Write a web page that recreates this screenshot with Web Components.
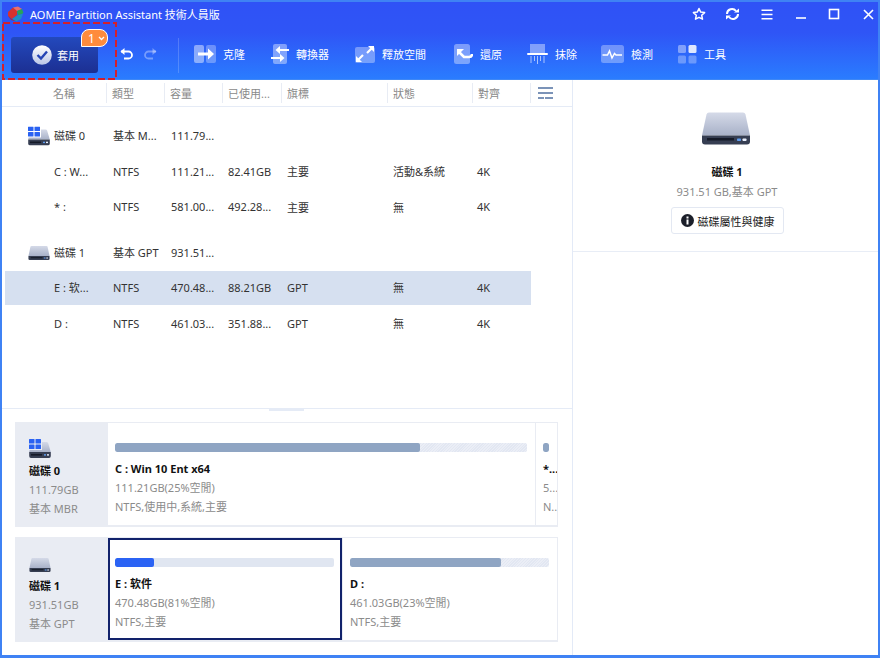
<!DOCTYPE html>
<html lang="zh-Hant">
<head>
<meta charset="utf-8">
<title>AOMEI Partition Assistant</title>
<style>
  html, body { margin: 0; padding: 0; background: #fff; }
  body { font-family: "Noto Sans", "Noto Sans CJK TC", sans-serif; font-size: 11px; color: #333; }
</style>
</head>
<body>
<app-window></app-window>
<script>
const FONT = `"Noto Sans", "Noto Sans CJK TC", sans-serif`;

const diskBody = (id) => `
  <defs><linearGradient id="${id}" x1="0" y1="0" x2="0" y2="1"><stop offset="0" stop-color="#d5dae8"/><stop offset="1" stop-color="#a8b1c8"/></linearGradient></defs>
  <path d="M5.500 2Q6 0 8 0H42Q44 0 44.500 2L49 23H1Z" fill="url(#${id})"/>
  <path d="M1 23H49V29Q49 32 46 32H4Q1 32 1 29Z" fill="#363e52"/>
  <rect x="6" y="25.500" width="27" height="2.500" fill="#151a28"/>
  <rect x="36" y="26" width="4" height="2.500" rx=".8" fill="#5f9df0"/>
  <rect x="41.500" y="26" width="4" height="2.500" rx=".8" fill="#e8eefc"/>`;

const winDisk = (id) => `
  <defs><linearGradient id="${id}" x1="0" y1="0" x2="0" y2="1"><stop offset="0" stop-color="#d5dae8"/><stop offset="1" stop-color="#a8b1c8"/></linearGradient></defs>
  <path d="M13 3H17.500Q18.800 3 19.200 4.200L21.800 13H.2L.6 11H13Z" fill="url(#${id})"/>
  <path d="M.2 13H21.800V17Q21.800 19 20 19H2Q.2 19 .2 17Z" fill="#363e52"/>
  <rect x="2" y="15" width="11" height="1.600" fill="#151a28"/>
  <rect x="15" y="15.200" width="2" height="1.400" fill="#5f9df0"/>
  <rect x="18" y="15.200" width="2" height="1.400" fill="#e8eefc"/>
  <g fill="#2a62f2"><rect x="0" y="0" width="5.500" height="4.500" rx=".5"/><rect x="6.500" y="0" width="5.500" height="4.500" rx=".5"/><rect x="0" y="5.500" width="5.500" height="4.500" rx=".5"/><rect x="6.500" y="5.500" width="5.500" height="4.500" rx=".5"/></g>`;

const ICONS = {
  logo: `<svg width="17" height="16" viewBox="0 0 17 16"><path d="M1 6 6 1.500 10 3V9L5 13 1 10Z" fill="#d6322f"/><path d="M6 1.500 11 .5 15 3 10 5Z" fill="#e9706d"/><path d="M10 5 15 3 16.500 7 11 10Z" fill="#27a35a"/><path d="M5 13 11 9 16 8 14 13 9 15.500Z" fill="#1f8fc4"/><path d="M1 10 5 13 9 15.500 4 14Z" fill="#a12a4e"/></svg>`,
  star: `<svg width="14" height="14" viewBox="0 0 14 14"><path d="M7 1.500 8.700 5.100 12.600 5.600 9.700 8.300 10.500 12.200 7 10.300 3.500 12.200 4.300 8.300 1.400 5.600 5.300 5.100Z" fill="none" stroke="#fff" stroke-width="1.500" stroke-linejoin="round"/></svg>`,
  refresh: `<svg width="15" height="14" viewBox="0 0 15 14"><path d="M2 7A5 5 0 0 1 11 4" fill="none" stroke="#fff" stroke-width="2"/><path d="M13 7A5 5 0 0 1 4 10" fill="none" stroke="#fff" stroke-width="2"/><path d="M9 5.500H14V1.500Z" fill="#fff"/><path d="M6 8.500H1V12.500Z" fill="#fff"/></svg>`,
  menu: `<svg width="12" height="11" viewBox="0 0 12 11"><path d="M.5 1.200H11.500M.5 5.500H11.500M.5 9.800H11.500" stroke="#fff" stroke-width="1.500"/></svg>`,
  min: `<svg width="12" height="12" viewBox="0 0 12 12"><path d="M1 10H11" stroke="#fff" stroke-width="1.600"/></svg>`,
  max: `<svg width="12" height="12" viewBox="0 0 12 12"><rect x="1.500" y="1.500" width="9" height="9" fill="none" stroke="#fff" stroke-width="1.600"/></svg>`,
  close: `<svg width="11" height="11" viewBox="0 0 11 11"><path d="M1 1 10 10M10 1 1 10" stroke="#fff" stroke-width="1.600"/></svg>`,
  check: `<svg width="20" height="20" viewBox="0 0 20 20"><defs><linearGradient id="ck" x1="0" y1="0" x2="0" y2="1"><stop offset="0" stop-color="#fff"/><stop offset="1" stop-color="#b9c4e6"/></linearGradient></defs><circle cx="10" cy="10" r="9.800" fill="url(#ck)"/><path d="M5.500 10 9 13.500 15 6.500" fill="none" stroke="#2443b4" stroke-width="2.400"/></svg>`,
  undo: `<svg width="14" height="12" viewBox="0 0 14 12"><path d="M1 3.500H8.500A3.500 3.500 0 0 1 8.500 10.500H4" fill="none" stroke="#fff" stroke-width="1.800"/><path d="M4.500 0 .5 3.500 4.500 7Z" fill="#fff"/></svg>`,
  redo: `<svg width="14" height="12" viewBox="0 0 14 12"><path d="M13 3.500H5.500A3.500 3.500 0 0 0 5.500 10.500H10" fill="none" stroke="#fff" stroke-opacity=".35" stroke-width="1.800"/><path d="M9.500 0 13.500 3.500 9.500 7Z" fill="#fff" fill-opacity=".35"/></svg>`,
  clone: `<svg width="22" height="18" viewBox="0 0 22 18"><rect x="0" y="0" width="10" height="18" rx="2" fill="#fff" fill-opacity=".45"/><rect x="12" y="0" width="10" height="18" rx="2" fill="#fff" fill-opacity=".3"/><path d="M4 9H16" stroke="#fff" stroke-width="3"/><path d="M14 3.500 20 9 14 14.500Z" fill="#fff"/></svg>`,
  convert: `<svg width="18" height="20" viewBox="0 0 18 20"><rect x="2" y="0" width="14" height="20" rx="2" fill="#fff" fill-opacity=".4"/><path d="M8 6H18" stroke="#fff" stroke-width="2"/><path d="M9 2 4.500 6 9 10Z" fill="#fff"/><path d="M0 14H10" stroke="#fff" stroke-width="2"/><path d="M9 10 13.500 14 9 18Z" fill="#fff"/></svg>`,
  space: `<svg width="20" height="18" viewBox="0 0 20 18"><path d="M2 2H18Q20 2 20 4V16Q20 18 18 18H2Q0 18 0 16V4Q0 2 2 2Z" fill="#fff" fill-opacity=".35"/><path d="M3 15 8 10M12 8 17 3" stroke="#fff" stroke-width="2.200"/><path d="M1 17V11L7 17Z" fill="#fff"/><path d="M19 1V7L13 1Z" fill="#fff"/></svg>`,
  restore: `<svg width="19" height="20" viewBox="0 0 19 20"><rect x="0" y="0" width="16" height="20" rx="2.500" fill="#fff" fill-opacity=".38"/><path d="M5 8 10 13H15Q18 13 18 10" fill="none" stroke="#fff" stroke-width="2.600"/><path d="M3 5H10L3 12Z" fill="#fff"/></svg>`,
  wipe: `<svg width="21" height="20" viewBox="0 0 21 20"><path d="M3 0H18V9H3Z" fill="#fff" fill-opacity=".4"/><rect x="0" y="9" width="21" height="2" rx="1" fill="#fff"/><path d="M4 12V19M7.500 12V17M10.500 12V20M13.500 12V17M17 12V19" stroke="#fff" stroke-opacity=".6" stroke-width="1"/></svg>`,
  check2: `<svg width="23" height="18" viewBox="0 0 23 18"><rect width="23" height="18" rx="2.500" fill="#fff" fill-opacity=".32"/><path d="M1.500 10H6.500L8.500 6 11 13 13.500 8.500 15 10H21" fill="none" stroke="#fff" stroke-width="1.500"/></svg>`,
  tools: `<svg width="19" height="19" viewBox="0 0 19 19"><rect width="8" height="8" rx="1.500" fill="#fff" fill-opacity=".4"/><rect x="10.500" width="8" height="8" rx="1.500" fill="#fff" fill-opacity=".85"/><rect y="10.500" width="8" height="8" rx="1.500" fill="#fff" fill-opacity=".3"/><rect x="10.500" y="10.500" width="8" height="8" rx="1.500" fill="#fff" fill-opacity=".3"/></svg>`,
  columns: `<svg width="15" height="12" viewBox="0 0 15 12"><rect width="15" height="2" fill="#7b93b8"/><rect y="5" width="15" height="2" fill="#7b93b8"/><rect y="10" width="6" height="2" fill="#7b93b8"/><rect x="7" y="10" width="8" height="2" fill="#7b93b8"/></svg>`,
  info: `<svg width="13" height="13" viewBox="0 0 13 13"><circle cx="6.500" cy="6.500" r="6.500" fill="#1b1f2a"/><rect x="5.500" y="5.500" width="2" height="5" fill="#fff"/><rect x="5.500" y="2.500" width="2" height="2" fill="#fff"/></svg>`,
  diskWin: `<svg width="22" height="19" viewBox="0 0 22 19">${winDisk("dw1")}</svg>`,
  diskWinSmall: `<svg width="22" height="19" viewBox="0 0 22 19">${winDisk("dw2")}</svg>`,
  disk: `<svg width="22" height="16" viewBox="0 0 50 32">${diskBody("d1")}</svg>`,
  diskCard: `<svg width="22" height="16" viewBox="0 0 50 32">${diskBody("d2")}</svg>`,
  diskBig: `<svg width="50" height="33" viewBox="0 0 50 32">${diskBody("d3")}</svg>`,
};

class UiIcon extends HTMLElement {
  connectedCallback() {
    if (this.shadowRoot) return;
    this.attachShadow({ mode: "open" });
    this.shadowRoot.innerHTML = `
      <style>
        :host { display: inline-flex; align-items: center; justify-content: center; line-height: 0; flex: none; }
      </style>
      ${ICONS[this.getAttribute("name")] || ""}
    `;
  }
}

class TitleBar extends HTMLElement {
  connectedCallback() {
    this.attachShadow({ mode: "open" });
    this.shadowRoot.innerHTML = `
      <style>
        :host { display: flex; align-items: center; height: 24px; padding: 0 4.500px 0 5px; box-sizing: border-box; color: #fff; font-size: 11px; }
        .title { margin-left: 6px; }
        .btns { margin-left: auto; display: grid; grid-template-columns: repeat(6, 33.500px); justify-items: end; }
      </style>
      <ui-icon name="logo"></ui-icon>
      <span class="title">AOMEI Partition Assistant 技術人員版</span>
      <div class="btns">
        <ui-icon name="star"></ui-icon>
        <ui-icon name="refresh"></ui-icon>
        <ui-icon name="menu"></ui-icon>
        <ui-icon name="min"></ui-icon>
        <ui-icon name="max"></ui-icon>
        <ui-icon name="close"></ui-icon>
      </div>
    `;
  }
}

class ApplyButton extends HTMLElement {
  connectedCallback() {
    this.attachShadow({ mode: "open" });
    this.shadowRoot.innerHTML = `
      <style>
        :host { display: flex; position: relative; align-items: center; width: 87px; height: 36px; box-sizing: border-box; padding: 0 0 1px 21px; gap: 5px; border-radius: 3px; color: #fff; background: linear-gradient(#2349bd, #1c2f92); }
        ui-icon { margin-top: 1px; }
        .badge { position: absolute; left: 70px; top: -8px; width: 27px; height: 18px; box-sizing: border-box; border: 1px solid #fff; border-radius: 8px 8px 8px 0; background: #ff8b3d; font-size: 12px; display: flex; align-items: center; padding-left: 6px; gap: 3px; }
        .badge svg { display: block; }
      </style>
      <ui-icon name="check"></ui-icon><span>套用</span>
      <span class="badge">1<svg width="7" height="5" viewBox="0 0 7 5"><path d="M1 1 3.500 3.500 6 1" fill="none" stroke="#fff" stroke-width="1.300"/></svg></span>
    `;
  }
}

class ToolButton extends HTMLElement {
  connectedCallback() {
    this.attachShadow({ mode: "open" });
    this.shadowRoot.innerHTML = `
      <style>
        :host { display: flex; align-items: center; gap: 7px; color: #fff; }
      </style>
      <ui-icon name="${this.getAttribute("icon")}"></ui-icon><span>${this.getAttribute("label")}</span>
    `;
  }
}

class ToolBar extends HTMLElement {
  connectedCallback() {
    this.attachShadow({ mode: "open" });
    this.shadowRoot.innerHTML = `
      <style>
        :host { display: flex; align-items: center; height: 53px; padding: 5px 0 0 9px; box-sizing: border-box; }
        .hist { display: flex; gap: 9px; margin: -2px 0 0 22px; }
        .sep { width: 1px; height: 35px; background: rgba(255,255,255,.18); margin: 0 15px 0 21px; }
        .tools { display: grid; grid-template-columns: 77px 84px 99px 73px 74px 77px 60px; align-items: center; margin-top: -2px; }
      </style>
      <apply-button></apply-button>
      <div class="hist"><ui-icon name="undo"></ui-icon><ui-icon name="redo"></ui-icon></div>
      <div class="sep"></div>
      <div class="tools">
        <tool-button icon="clone" label="克隆"></tool-button>
        <tool-button icon="convert" label="轉換器"></tool-button>
        <tool-button icon="space" label="釋放空間"></tool-button>
        <tool-button icon="restore" label="還原"></tool-button>
        <tool-button icon="wipe" label="抹除"></tool-button>
        <tool-button icon="check2" label="檢測"></tool-button>
        <tool-button icon="tools" label="工具"></tool-button>
      </div>
    `;
  }
}

const COLS = "59px 58px 57px 59px 106px 84px 50px";

class TableHead extends HTMLElement {
  connectedCallback() {
    this.attachShadow({ mode: "open" });
    const cells = ["名稱", "類型", "容量", "已使用...", "旗標", "狀態", "對齊"];
    const widths = [105, 58, 58, 59, 106, 85, 58];
    this.shadowRoot.innerHTML = `
      <style>
        :host { display: flex; height: 26px; align-items: center; border-bottom: 1px solid #e5ebf6; color: #8a8a8a; }
        div { box-sizing: border-box; height: 20px; line-height: 21px; padding-left: 5px; border-right: 1px solid #e8ecf4; white-space: nowrap; }
        div:first-of-type { padding-left: 51px; }
        .cfg { margin-left: 7px; }
      </style>
      ${cells.map((c, i) => `<div style="width:${widths[i]}px">${c}</div>`).join("")}
      <ui-icon class="cfg" name="columns"></ui-icon>
    `;
  }
}

class TableRow extends HTMLElement {
  connectedCallback() {
    this.attachShadow({ mode: "open" });
    const cells = (this.getAttribute("cells") || "").split("|");
    const icon = this.getAttribute("icon");
    this.shadowRoot.innerHTML = `
      <style>
        :host { display: grid; grid-template-columns: ${COLS}; align-items: center; position: relative; height: 35px; margin-left: 3px; width: 526px; padding: 0 0 2px 49px; box-sizing: border-box; color: #333; white-space: nowrap; }
        :host([selected]) { background: #d6e0f0; }
        ui-icon { position: absolute; left: 23px; top: 50%; transform: translateY(-50%); }
      </style>
      ${icon ? `<ui-icon name="${icon}"></ui-icon>` : ""}
      ${cells.map((c) => `<span>${c}</span>`).join("")}
    `;
  }
}

class DiskTable extends HTMLElement {
  connectedCallback() {
    this.attachShadow({ mode: "open" });
    this.shadowRoot.innerHTML = `
      <style>
        :host { display: block; height: 328px; box-sizing: border-box; }
        .rows { padding-top: 11px; }
      </style>
      <table-head></table-head>
      <div class="rows">
        <table-row class="r36" icon="diskWin" cells="磁碟 0|基本 M...|111.79..."></table-row>
        <table-row class="r36" cells="C : W...|NTFS|111.21...|82.41GB|主要|活動&amp;系統|4K"></table-row>
        <table-row cells="* :|NTFS|581.00...|492.28...|主要|無|4K"></table-row>
        <table-row class="r36 gap" icon="disk" cells="磁碟 1|基本 GPT|931.51..."></table-row>
        <table-row class="r34" selected cells="E : 软...|NTFS|470.48...|88.21GB|GPT|無|4K"></table-row>
        <table-row class="r36" cells="D :|NTFS|461.03...|351.88...|GPT|無|4K"></table-row>
      </div>
    `;
    this.shadowRoot.querySelectorAll(".r36").forEach((r) => r.style.height = "36px");
    this.shadowRoot.querySelectorAll(".r34").forEach((r) => { r.style.height = "34px"; r.style.marginBottom = "1px"; });
    this.shadowRoot.querySelectorAll(".gap").forEach((r) => r.style.marginTop = "10px");
  }
}

class UsageBar extends HTMLElement {
  connectedCallback() {
    this.attachShadow({ mode: "open" });
    const pct = this.getAttribute("pct");
    const blue = this.hasAttribute("blue");
    this.shadowRoot.innerHTML = `
      <style>
        :host { display: block; height: 9px; border-radius: 2px; overflow: hidden; background: ${blue ? "#e0e6f1" : "repeating-linear-gradient(135deg, #e2e7f2 0 1px, #ebeef6 1px 2px)"}; }
        div { height: 100%; width: ${pct}%; border-radius: 2px; background: ${blue ? "#2b63f4" : "#8fa5c3"}; }
      </style>
      <div></div>
    `;
  }
}

class PartitionBlock extends HTMLElement {
  connectedCallback() {
    this.attachShadow({ mode: "open" });
    const a = (n) => this.getAttribute(n) || "";
    this.shadowRoot.innerHTML = `
      <style>
        :host { display: block; box-sizing: border-box; background: #fff; padding: 20px 8px 0 7px; overflow: hidden; white-space: nowrap; min-width: 0; }
        :host([active]) { outline: 2px solid #12226b; outline-offset: -2px; }
        b { display: block; margin-top: 7px; height: 19px; line-height: 19px; color: #111; font-weight: 700; }
        p { margin: 0; height: 19px; line-height: 19px; color: #8b8b8b; }
      </style>
      <usage-bar pct="${a("pct")}" ${this.hasAttribute("active") ? "blue" : ""}></usage-bar>
      <b>${a("name")}</b>
      <p>${a("size")}</p>
      <p>${a("info")}</p>
    `;
  }
}

class DiskCard extends HTMLElement {
  connectedCallback() {
    this.attachShadow({ mode: "open" });
    const a = (n) => this.getAttribute(n) || "";
    this.shadowRoot.innerHTML = `
      <style>
        :host { display: grid; grid-template-columns: 92px 1fr; height: 105px; box-sizing: border-box; background: #e9ecf3; padding: 1px 1px 2px 0; }
        .info { padding: 15px 0 0 14px; white-space: nowrap; color: #8b8b8b; }
        ui-icon { height: 20px; align-items: flex-end; }
        b { display: block; margin-top: 0; height: 19px; line-height: 19px; color: #111; }
        p { margin: 0; height: 19px; line-height: 19px; }
        .parts { display: grid; grid-template-columns: ${a("cols")}; gap: 1px; min-width: 0; margin-left: 1px; }
      </style>
      <div class="info">
        <ui-icon name="${a("icon")}"></ui-icon>
        <b>${a("name")}</b>
        <p>${a("size")}</p>
        <p>${a("kind")}</p>
      </div>
      <div class="parts"><slot></slot></div>
    `;
  }
}

class DiskMap extends HTMLElement {
  connectedCallback() {
    this.attachShadow({ mode: "open" });
    this.shadowRoot.innerHTML = `
      <style>
        :host { display: grid; grid-template-rows: 105px 105px; gap: 10px; padding: 13px 14px 0 13px; position: relative; border-top: 1px solid #e5ebf6; }
        .grip { position: absolute; left: 267px; top: 0; width: 35px; height: 2px; background: #e5ebf6; }
      </style>
      <div class="grip"></div>
      <disk-card icon="diskWinSmall" name="磁碟 0" size="111.79GB" kind="基本 MBR" cols="427px 21px">
        <partition-block pct="74" name="C : Win 10 Ent x64" size="111.21GB(25%空閒)" info="NTFS,使用中,系統,主要"></partition-block>
        <partition-block pct="100" name="*..." size="5..." info="N.."></partition-block>
      </disk-card>
      <disk-card icon="diskCard" name="磁碟 1" size="931.51GB" kind="基本 GPT" cols="234px 214px">
        <partition-block active pct="18" name="E : 软件" size="470.48GB(81%空閒)" info="NTFS,主要"></partition-block>
        <partition-block pct="76" name="D :" size="461.03GB(23%空閒)" info="NTFS,主要"></partition-block>
      </disk-card>
    `;
  }
}

class SidePanel extends HTMLElement {
  connectedCallback() {
    this.attachShadow({ mode: "open" });
    this.shadowRoot.innerHTML = `
      <style>
        :host { display: flex; flex-direction: column; align-items: center; box-sizing: border-box; border-left: 1px solid #e3eaf7; padding-top: 32px; color: #8b8b8b; }
        b { margin: 17px 0 0 3px; height: 19px; line-height: 19px; color: #111; }
        p { margin: 1px 0 0 3px; height: 19px; line-height: 19px; }
        button { all: unset; display: flex; align-items: center; justify-content: center; gap: 4px; box-sizing: border-box; width: 113px; height: 27px; margin: 6px 0 0 4px; border: 1px solid #e3e8f2; border-radius: 3px; color: #222; font: inherit; }
        hr { align-self: stretch; border: 0; height: 1px; background: #e8edf6; margin: 17px 0 0; }
      </style>
      <ui-icon name="diskBig"></ui-icon>
      <b>磁碟 1</b>
      <p>931.51 GB,基本 GPT</p>
      <button><ui-icon name="info"></ui-icon><span>磁碟屬性與健康</span></button>
      <hr>
    `;
  }
}

class AppWindow extends HTMLElement {
  connectedCallback() {
    this.attachShadow({ mode: "open" });
    this.shadowRoot.innerHTML = `
      <style>
        :host { display: grid; grid-template-rows: 80px 1fr; width: 880px; height: 658px; box-sizing: border-box; border: 2px solid #3f82f4; border-top-width: 0; border-bottom-width: 3px; position: relative; background: #fff; font-family: ${FONT}; font-size: 11px; }
        header { background: linear-gradient(#2f52f6 0, #2f55f6 40%, #2a7cff 100%); border-top: 2px solid #3f82f4; box-sizing: border-box; border-bottom: 1px solid #4088f5; }
        main { display: grid; grid-template-columns: 570px 1fr; min-height: 0; }
        .left { display: grid; grid-template-rows: 328px 1fr; min-height: 0; }
        .mark { position: absolute; left: 0; top: 22px; width: 115px; height: 58px; pointer-events: none; line-height: 0; }
      </style>
      <header>
        <title-bar></title-bar>
        <tool-bar></tool-bar>
      </header>
      <main>
        <div class="left">
          <disk-table></disk-table>
          <disk-map></disk-map>
        </div>
        <side-panel></side-panel>
      </main>
      <div class="mark"><svg width="115" height="58"><rect x="1" y="1" width="113" height="56" fill="none" stroke="#d3202c" stroke-width="2" stroke-dasharray="7 3"/></svg></div>
    `;
  }
}

customElements.define("ui-icon", UiIcon);
customElements.define("title-bar", TitleBar);
customElements.define("apply-button", ApplyButton);
customElements.define("tool-button", ToolButton);
customElements.define("tool-bar", ToolBar);
customElements.define("table-head", TableHead);
customElements.define("table-row", TableRow);
customElements.define("disk-table", DiskTable);
customElements.define("usage-bar", UsageBar);
customElements.define("partition-block", PartitionBlock);
customElements.define("disk-card", DiskCard);
customElements.define("disk-map", DiskMap);
customElements.define("side-panel", SidePanel);
customElements.define("app-window", AppWindow);
</script>
</body>
</html>
